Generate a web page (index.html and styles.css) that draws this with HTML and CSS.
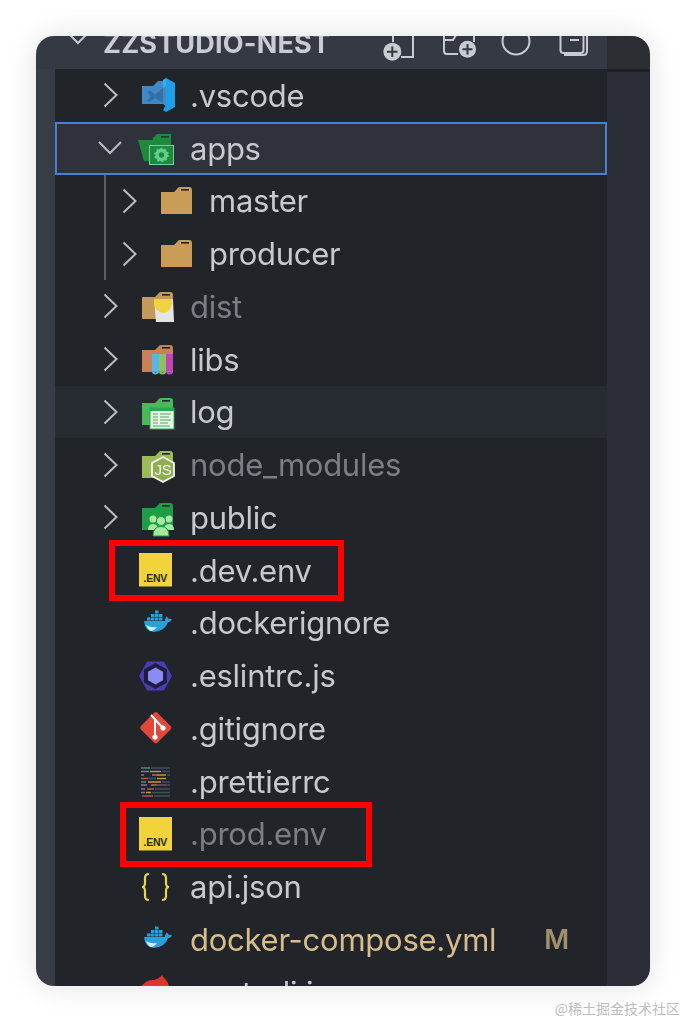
FILE: index.html
```html
<!DOCTYPE html>
<html lang="en">
<head>
    <meta charset="UTF-8">
    <meta name="viewport" content="width=device-width, initial-scale=1.0">
    <title>Explorer</title>
    <link rel="stylesheet" href="styles.css">
</head>
<body>
    <svg class="sprite" aria-hidden="true">
        <defs>
            <path id="chev-right" d="M6.5 1.5 18.5 13 6.5 24.5"/>
            <path id="chev-down" d="M1 7 12 18 23 7"/>
            <g id="folder">
                <path d="M3 8H16L19 5Q20 3 22 3H31Q34 3 34 6V30H3Z"/>
                <rect x="23" y="5" width="8" height="1.6" fill="#212429"/>
            </g>
            <g id="env">
                <rect x="0" y="0" width="33" height="33.5" fill="#f0d43a"/>
                <text class="env-text" x="4.500" y="29">.ENV</text>
            </g>
            <g id="docker">
                <path fill="#2a9fd8" d="M5 15H26Q26 12.500 27.500 10.500Q29.500 11.500 29.800 13Q31.500 12.500 33 13.500Q31.500 16 29 16.200Q26 25 15 26Q6 26 5 15Z"/>
                <path fill="#d8eef8" d="M7 19Q12 22 18 21Q15 25 12 25Q9 24 7 19Z"/>
                <path fill="#2a9fd8" d="M8 11.500h3.500v3H8zM12 11.500h3.500v3H12zM16 11.500h3.500v3H16zM20 11.500h3.500v3H20zM12 8h3.500v3H12zM16 8h3.500v3H16zM20 8h3.500v3H20zM16 4.500h3.500v3H16z"/>
            </g>
        </defs>
    </svg>

    <div class="window">
        <header class="header">
            <svg class="head-chev" viewBox="0 0 26 26"><use href="#chev-down"/></svg>
            <span class="title">ZZSTUDIO-NEST</span>
            <div class="actions">
                <svg class="action" viewBox="0 0 38 33">
                    <path d="M33 -1V21H21M13 -1V6"/>
                    <circle class="dot" cx="12.300" cy="15.700" r="9"/>
                    <path class="plus" d="M12.300 10.500V21M7 15.700H17.500"/>
                </svg>
                <svg class="action" viewBox="0 0 38 33">
                    <path d="M5 -1V15Q5 18 8 18H19M5 4H14L17 -1M35 -1V6"/>
                    <circle class="dot" cx="28.500" cy="13.300" r="8.500"/>
                    <path class="plus" d="M28.500 8V18.500M23.500 13.300H33.500"/>
                </svg>
                <svg class="action" viewBox="0 0 38 33">
                    <circle cx="18" cy="5" r="13.500"/>
                </svg>
                <svg class="action" viewBox="0 0 38 33">
                    <rect x="3.500" y="-10" width="23" height="27" rx="3"/>
                    <path d="M30 -1V15Q30 19 26 19H7M13 4H22"/>
                </svg>
            </div>
        </header>
        <div class="corner"></div>
        <div class="strip-left"></div>

        <main class="tree">
            <div class="row">
                <svg class="twistie" viewBox="0 0 26 26"><use href="#chev-right"/></svg>
                <svg class="icon" viewBox="0 0 34 34">
                    <path fill="#4188c4" d="M3 8H14L17 5Q18 3 20 3H30V31L24 26H3Z"/>
                    <path fill="#346fa6" d="M8 14 11 12.500 16 16.500 24 10V25L16 20 11 24 8 22.500 12 18.500Z"/>
                    <path fill="#1e9fe8" d="M27 0 36 5V29L27 34 24 32 27 27Z"/>
                    <path fill="#3aaef0" d="M27 0 24 2 24 10 27 8Z"/>
                </svg>
                <span class="name">.vscode</span>
            </div>
            <div class="row selected">
                <svg class="twistie" viewBox="0 0 26 26"><use href="#chev-down"/></svg>
                <svg class="icon" viewBox="0 0 34 34">
                    <path fill="#1f8a3d" d="M14 7 18 3H32V26H10Z"/>
                    <rect x="22" y="5" width="8" height="1.600" fill="#2f323b"/>
                    <path fill="#1f8a3d" d="M-1 9H30L27 30H5Z"/>
                    <rect x="10.500" y="14.500" width="24" height="19" fill="#1f8a3d" stroke="#6fd39a" stroke-width="1"/>
                    <circle cx="22.500" cy="24" r="4.500" fill="none" stroke="#5fd08a" stroke-width="3.500"/>
                    <circle cx="22.500" cy="24" r="6.500" fill="none" stroke="#5fd08a" stroke-width="1.600" stroke-dasharray="2 2.100"/>
                </svg>
                <span class="name">apps</span>
            </div>
            <div class="children">
                <div class="row">
                    <svg class="twistie" viewBox="0 0 26 26"><use href="#chev-right"/></svg>
                    <svg class="icon" viewBox="0 0 34 34"><use href="#folder" fill="#c99d55"/></svg>
                    <span class="name">master</span>
                </div>
                <div class="row">
                    <svg class="twistie" viewBox="0 0 26 26"><use href="#chev-right"/></svg>
                    <svg class="icon" viewBox="0 0 34 34"><use href="#folder" fill="#c99d55"/></svg>
                    <span class="name">producer</span>
                </div>
            </div>
            <div class="row">
                <svg class="twistie" viewBox="0 0 26 26"><use href="#chev-right"/></svg>
                <svg class="icon" viewBox="0 0 34 34">
                    <use href="#folder" fill="#c39a56"/>
                    <path fill="#e4e4e8" d="M15 10H34L35 33H17Z"/>
                    <path fill="#f2d33f" d="M15 10H33V15Q31 24 24 24Q17 23 15 15Z"/>
                </svg>
                <span class="name dim">dist</span>
            </div>
            <div class="row">
                <svg class="twistie" viewBox="0 0 26 26"><use href="#chev-right"/></svg>
                <svg class="icon" viewBox="0 0 34 34">
                    <use href="#folder" fill="#c68252"/>
                    <rect x="13" y="12" width="7" height="17" fill="#5bb6e8"/>
                    <rect x="20" y="12" width="7" height="17" fill="#8fc060"/>
                    <rect x="27" y="12" width="7" height="17" fill="#c043b8"/>
                    <path fill="none" stroke-width="2" stroke="#5bb6e8" d="M13.500 30Q16.500 33 19.500 30"/>
                    <path fill="none" stroke-width="2" stroke="#8fc060" d="M20.500 30Q23.500 33 26.500 30"/>
                    <path fill="none" stroke-width="2" stroke="#c043b8" d="M27.500 30Q30.500 33 33.500 30"/>
                </svg>
                <span class="name">libs</span>
            </div>
            <div class="row hover">
                <svg class="twistie" viewBox="0 0 26 26"><use href="#chev-right"/></svg>
                <svg class="icon" viewBox="0 0 34 34">
                    <use href="#folder" fill="#4cb85c"/>
                    <rect x="11" y="13" width="24" height="21" fill="#e6f5e4" stroke="#2ca84a"/>
                    <rect x="11" y="13" width="24" height="3" fill="#2ca84a"/>
                    <path stroke="#4fa964" stroke-width="1.200" d="M14 19H19M21 19H32M14 22H19M21 22H30M14 25H19M21 25H32M14 28H19M21 28H29M14 31H31"/>
                </svg>
                <span class="name">log</span>
            </div>
            <div class="row">
                <svg class="twistie" viewBox="0 0 26 26"><use href="#chev-right"/></svg>
                <svg class="icon" viewBox="0 0 34 34">
                    <use href="#folder" fill="#9bbb58"/>
                    <path fill="#8fae50" stroke="#f6f7f0" stroke-width="1.800" d="M24 9 35 15V28L24 34 13 28V15Z"/>
                    <text class="js-text" x="15.500" y="27">JS</text>
                </svg>
                <span class="name dim">node_modules</span>
            </div>
            <div class="row">
                <svg class="twistie" viewBox="0 0 26 26"><use href="#chev-right"/></svg>
                <svg class="icon" viewBox="0 0 34 34">
                    <use href="#folder" fill="#1f9c46"/>
                    <g fill="#a5e8a0">
                        <circle cx="14" cy="19" r="3.500"/>
                        <circle cx="30" cy="19" r="3.500"/>
                        <path d="M9 30Q9 24 14 24Q19 24 19 30Z"/>
                        <path d="M25 30Q25 24 30 24Q35 24 35 30Z"/>
                    </g>
                    <circle cx="22" cy="21" r="4.500" fill="#a5e8a0" stroke="#1f9c46"/>
                    <path d="M14 36Q14 26.500 22 26.500Q30 26.500 30 36Z" fill="#a5e8a0" stroke="#1f9c46"/>
                </svg>
                <span class="name">public</span>
            </div>
            <div class="row">
                <span class="twistie"></span>
                <svg class="icon" viewBox="0 0 34 34"><use href="#env"/></svg>
                <span class="name">.dev.env</span>
            </div>
            <div class="row">
                <span class="twistie"></span>
                <svg class="icon" viewBox="0 0 34 34"><use href="#docker"/></svg>
                <span class="name">.dockerignore</span>
            </div>
            <div class="row">
                <span class="twistie"></span>
                <svg class="icon" viewBox="0 0 34 34">
                    <path fill="#4c3ab8" d="M0 17 8 2.500H25L33 17 25 31.500H8Z"/>
                    <path fill="#1e1f3a" d="M16.500 4 28 10.500V23.500L16.500 30 5 23.500V10.500Z"/>
                    <path fill="#8a8cf5" d="M16.500 8.500 24 12.800V21.200L16.500 25.500 9 21.200V12.800Z"/>
                </svg>
                <span class="name">.eslintrc.js</span>
            </div>
            <div class="row">
                <span class="twistie"></span>
                <svg class="icon" viewBox="0 0 34 34">
                    <rect x="5" y="5" width="23.500" height="23.500" rx="2.500" transform="rotate(45 16.750 16.750)" fill="#e2483a"/>
                    <path fill="none" stroke="#fff" stroke-width="2" d="M12 4 24 17M16 9V26"/>
                    <circle cx="16" cy="26" r="2.600" fill="#fff"/>
                    <circle cx="24" cy="17" r="2.600" fill="#fff"/>
                </svg>
                <span class="name">.gitignore</span>
            </div>
            <div class="row">
                <span class="twistie"></span>
                <svg class="icon" viewBox="0 0 34 34">
                    <g stroke-width="1.300" opacity="0.75">
                        <path stroke="#56b3b4" d="M2 4H11M2 11H5M2 18H7M12 21H17M2 25H6"/>
                        <path stroke="#f8bc45" d="M11 7.500H22M18 11H27M18 14.500H27M9 18H22M7 28.500H12"/>
                        <path stroke="#ea5e5e" d="M2 14.500H9M13 21H27M3 32H14M8 25H15"/>
                        <path stroke="#bf85bf" d="M2 7.500H10M13 11H18M2 21H8M2 28.500H6"/>
                        <path stroke="#4d616e" d="M12 4H31M23 7.500H31M28 11H31M9 14.500H17M23 18H31M18 21H31M16 25H31M13 28.500H31M15 32H31"/>
                    </g>
                </svg>
                <span class="name">.prettierrc</span>
            </div>
            <div class="row">
                <span class="twistie"></span>
                <svg class="icon" viewBox="0 0 34 34"><use href="#env"/></svg>
                <span class="name dim">.prod.env</span>
            </div>
            <div class="row">
                <span class="twistie"></span>
                <svg class="icon" viewBox="0 0 34 34">
                    <path fill="none" stroke="#e8d44d" stroke-width="2.200" d="M10 4Q6 4 6 8V13Q6 17 3 17Q6 17 6 21V26Q6 30 10 30M23 4Q27 4 27 8V13Q27 17 30 17Q27 17 27 21V26Q27 30 23 30"/>
                </svg>
                <span class="name">api.json</span>
            </div>
            <div class="row">
                <span class="twistie"></span>
                <svg class="icon" viewBox="0 0 34 34"><use href="#docker"/></svg>
                <span class="name modified">docker-compose.yml</span>
                <span class="status">M</span>
            </div>
            <div class="row">
                <span class="twistie"></span>
                <svg class="icon" viewBox="0 0 34 34">
                    <path fill="#e0342f" d="M1 13Q7 4 15 5Q21 3 23 0Q25 3 27 5Q31 9 31 20L2 30Z"/>
                </svg>
                <span class="name">nest-cli.json</span>
            </div>

            <div class="mark mark-dev"></div>
            <div class="mark mark-prod"></div>
        </main>

        <div class="strip-right"></div>
    </div>

    <div class="watermark">@稀土掘金技术社区</div>
</body>
</html>
```

FILE: styles.css
```css
html, body {
    height: 100%;
}
body {
    font-family: 'Inter', 'Noto Sans', sans-serif;
    margin: 0;
    padding: 36px;
    box-sizing: border-box;
    background-color: #fff;
    overflow: hidden;
    position: relative;
}
.sprite {
    position: absolute;
    width: 0;
    height: 0;
}
.window {
    width: 614px;
    height: 950px;
    display: grid;
    grid-template-columns: 19px 552px 43px;
    grid-template-rows: 33px 917px;
    border-radius: 18px;
    overflow: hidden;
    box-shadow: 0 0 30px rgba(0,0,0,0.12);
}
.header {
    grid-column: 1 / 3;
    background-color: #353943;
    display: flex;
    align-items: flex-end;
    overflow: hidden;
    padding-left: 30px;
    filter: blur(0.4px);
}
.head-chev {
    width: 26px;
    height: 26px;
    flex: none;
    margin-bottom: 18px;
    fill: none;
    stroke: #c9ccd2;
    stroke-width: 2;
}
.title {
    margin-left: 11px;
    font-size: 27px;
    line-height: 26px;
    font-weight: 700;
    letter-spacing: 0.2px;
    color: #c9ccd2;
    padding-bottom: 12px;
    white-space: nowrap;
}
.actions {
    margin-left: auto;
    padding-right: 12px;
    display: flex;
    gap: 21px;
}
.action {
    width: 38px;
    height: 33px;
    flex: none;
    display: block;
    fill: none;
    stroke: #c8cbd0;
    stroke-width: 2;
}
.action .dot {
    fill: #c8cbd0;
    stroke: none;
}
.action .plus {
    stroke: #353943;
}
.corner {
    background-color: #2b2d33;
}
.strip-left {
    background-color: #383c46;
}
.strip-right {
    background-color: #2a2d35;
    border-top: 3px solid #1e2025;
}
.tree {
    background-color: #212429;
    overflow: hidden;
    position: relative;
}
.row {
    height: 52.75px;
    display: flex;
    align-items: center;
    padding-left: 43px;
    padding-right: 38px;
    box-sizing: border-box;
    font-size: 31px;
    letter-spacing: -0.25px;
    color: #c6c9ce;
    white-space: nowrap;
    filter: blur(0.4px);
}
.selected {
    background-color: #2f323b;
    box-shadow: inset 0 0 0 2px #4a7fd6;
}
.hover {
    background-color: #272b32;
}
.children {
    margin-left: 49px;
    border-left: 2px solid #5a5d63;
}
.children .row {
    padding-left: 11px;
}
.twistie {
    width: 26px;
    height: 26px;
    flex: none;
    margin-right: 15px;
    fill: none;
    stroke: #b9bcc1;
    stroke-width: 2;
}
.icon {
    width: 34px;
    height: 34px;
    flex: none;
    overflow: visible;
    margin-right: 17px;
}
.env-text {
    font-family: 'Liberation Sans', sans-serif;
    font-size: 10.5px;
    font-weight: 700;
    fill: #2a2a20;
}
.js-text {
    font-family: 'Liberation Sans', sans-serif;
    font-size: 15px;
    fill: #f6f7f0;
}
.dim {
    color: #7b7e84;
}
.modified {
    color: #d8bd8c;
}
.status {
    margin-left: auto;
    font-size: 27px;
    font-weight: 600;
    color: #a2906c;
}
.mark {
    position: absolute;
    box-sizing: border-box;
    border: 6px solid #f00;
}
.mark-dev {
    left: 54px;
    top: 471px;
    width: 235px;
    height: 61px;
}
.mark-prod {
    left: 65px;
    top: 733px;
    width: 252px;
    height: 65px;
}
.watermark {
    position: absolute;
    right: 6px;
    top: 998px;
    font-family: 'Noto Sans CJK SC', sans-serif;
    font-size: 14px;
    line-height: 20px;
    color: #bdbdbd;
    white-space: nowrap;
}
```
